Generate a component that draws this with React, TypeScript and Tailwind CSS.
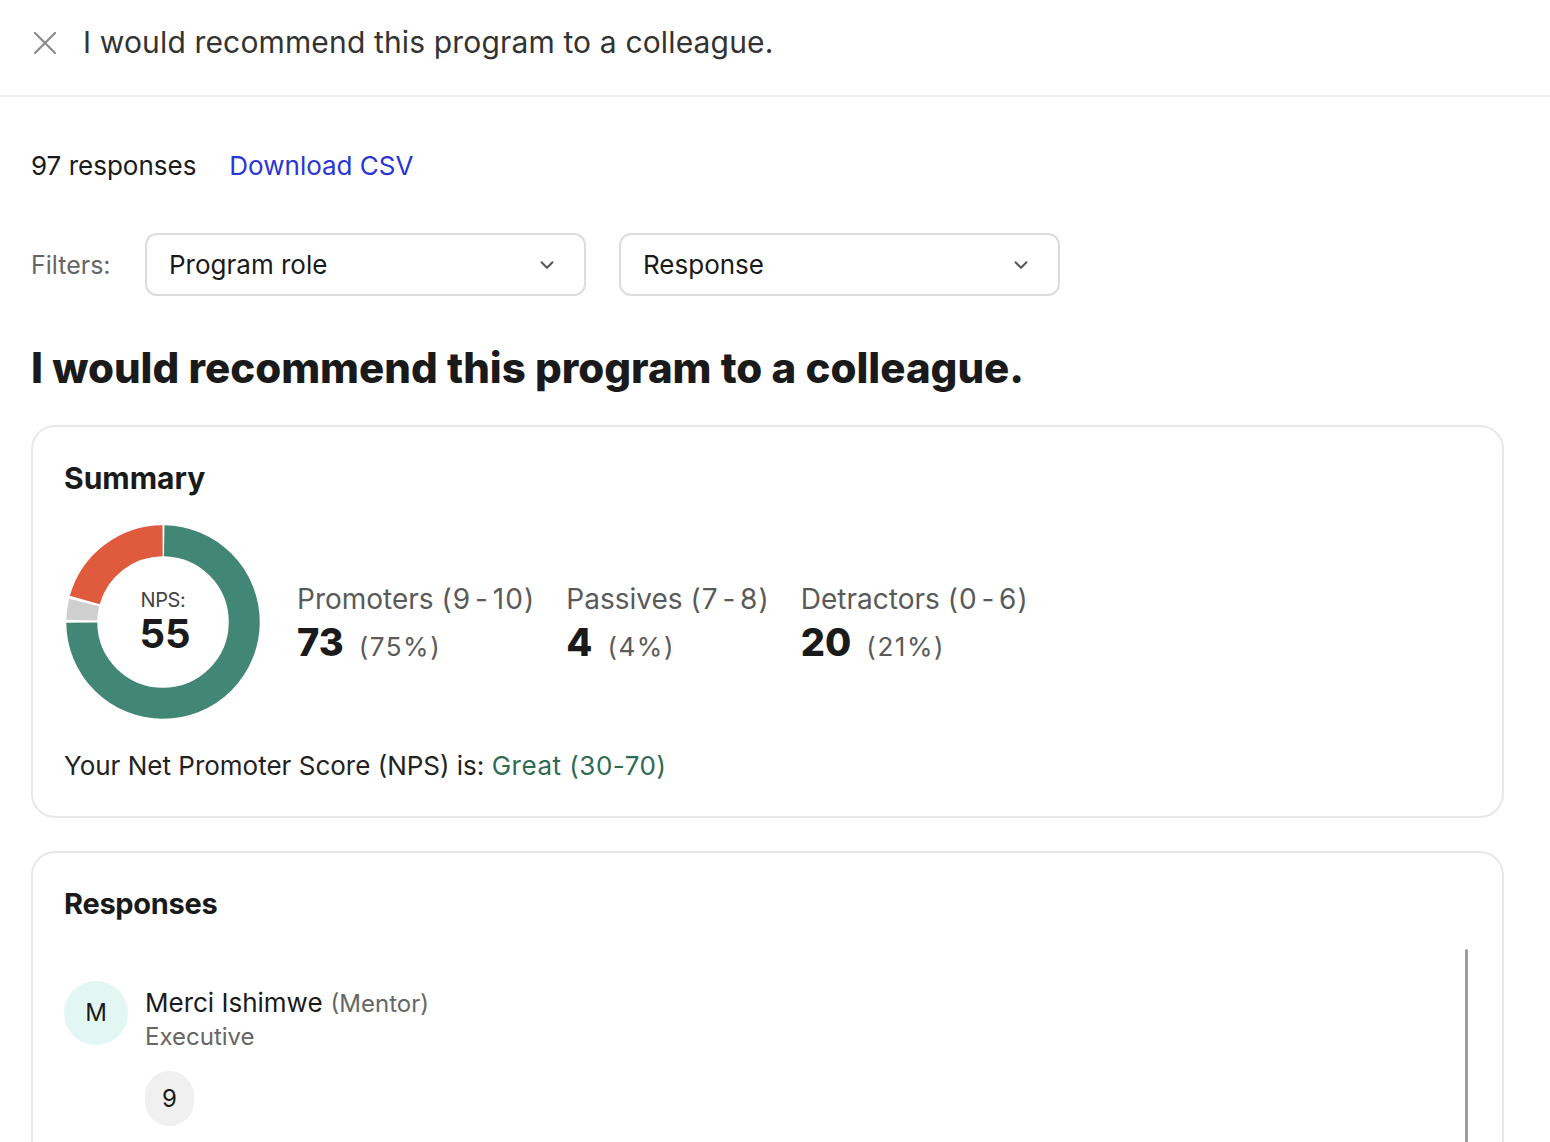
import React from "react";
import { ChevronDown } from "lucide-react";

const GREEN = "#428775";
const RED = "#e05a3e";
const GRAY = "#cfcfcf";

function Donut() {
  const r = 81.25;
  const c = 2 * Math.PI * r;
  const gap = 2.5;
  const parts = [
    { pct: 0.75, color: GREEN },
    { pct: 0.04, color: GRAY },
    { pct: 0.21, color: RED },
  ];
  let offset = 0;
  return (
    <div className="relative w-[194px] h-[194px] shrink-0 ml-[2px]">
      <svg width="194" height="194" viewBox="0 0 194 194" className="-rotate-90">
        {parts.map((p, i) => {
          const len = p.pct * c - gap;
          const el = (
            <circle
              key={i}
              cx="97"
              cy="97"
              r={r}
              fill="none"
              stroke={p.color}
              strokeWidth="31"
              strokeDasharray={`${len} ${c - len}`}
              strokeDashoffset={-(offset + gap / 2)}
            />
          );
          offset += p.pct * c;
          return el;
        })}
      </svg>
      <div className="absolute inset-0 flex flex-col items-center justify-center pb-[1px]">
        <span className="text-[20px] leading-[24px] text-[#444] tracking-[-0.02em]">NPS:</span>
        <span className="text-[40px] leading-[44px] font-bold text-[#1a1a1a] pl-[4px]">55</span>
      </div>
    </div>
  );
}

function Stat({ label, range, value, pct }: { label: string; range: string; value: string; pct: string }) {
  return (
    <div className="flex flex-col">
      <div className="text-[28px] leading-[34px] text-[#5a5a5a]">
        {label} <span className="tracking-[0.04em]">({range})</span>
      </div>
      <div className="flex items-baseline gap-[15px] mt-[4px]">
        <span className="text-[38px] leading-[44px] font-extrabold text-[#1a1a1a]">{value}</span>
        <span className="text-[26px] leading-[32px] text-[#5a5a5a] tracking-[0.06em]">({pct})</span>
      </div>
    </div>
  );
}

function Select({ label }: { label: string }) {
  return (
    <div className="flex items-center justify-between w-[441px] h-[63px] rounded-[12px] border-2 border-[#dcdcdc] pl-[22px] pr-[26px]">
      <span className="text-[26px] text-[#1a1a1a]">{label}</span>
      <ChevronDown size={22} strokeWidth={2.2} className="text-[#555]" />
    </div>
  );
}

export default function App() {
  return (
    <div className="min-h-screen bg-white font-['Inter','Liberation_Sans',sans-serif] text-[#1a1a1a]">
      <header className="flex items-center h-[97px] border-b-2 border-[#efefef] pl-[34px] gap-[27px] pb-[10px]">
        <svg width="22" height="22" viewBox="0 0 22 22" className="shrink-0">
          <path d="M1 1 L21 21 M21 1 L1 21" stroke="#8a8a8a" strokeWidth="2.2" strokeLinecap="round" />
        </svg>
        <h1 className="text-[30px] text-[#333] tracking-[0.005em]">
          I would recommend this program to a colleague.
        </h1>
      </header>

      <main className="px-[31px]">
        <div className="flex items-center gap-[33px] mt-[52px] h-[32px]">
          <span className="text-[26px] text-[#1a1a1a]">97 responses</span>
          <a className="text-[26px] text-[#2a35d6]">Download CSV</a>
        </div>

        <div className="flex items-center mt-[52px]">
          <span className="text-[25px] text-[#666] w-[114px] pt-[2px]">Filters:</span>
          <div className="flex gap-[33px]">
            <Select label="Program role" />
            <Select label="Response" />
          </div>
        </div>

        <h2 className="mt-[46px] text-[42px] leading-[52px] font-extrabold tracking-[0em] text-[#1a1a1a]">
          I would recommend this program to a colleague.
        </h2>

        <section className="mt-[31px] w-[1473px] rounded-[24px] border-2 border-[#e8e8e8] pt-[31px] pl-[31px] pb-[34px]">
          <h3 className="text-[30px] leading-[40px] font-bold tracking-[0em]">Summary</h3>
          <div className="flex items-center mt-[27px]">
            <Donut />
            <div className="flex gap-[31px] ml-[37px] pt-[2px]">
              <Stat label="Promoters" range={"9\u200A-\u200A10"} value="73" pct="75%" />
              <Stat label="Passives" range={"7\u200A-\u200A8"} value="4" pct="4%" />
              <Stat label="Detractors" range={"0\u200A-\u200A6"} value="20" pct="21%" />
            </div>
          </div>
          <p className="mt-[31px] text-[26px] leading-[32px] text-[#222]">
            Your Net Promoter Score (NPS) is:{" "}
            <span className="text-[#2f6a55] tracking-[0.02em]">Great (30-70)</span>
          </p>
        </section>

        <section className="mt-[33px] w-[1473px] h-[320px] rounded-t-[24px] border-2 border-b-0 border-[#e8e8e8] pt-[31px] pl-[31px] pr-[34px]">
          <h3 className="text-[29px] leading-[40px] font-bold tracking-[-0.01em]">Responses</h3>
          <div className="flex justify-between mt-[25px]">
            <div className="flex gap-[17px] pt-[32px]">
              <div className="w-[64px] h-[64px] rounded-full bg-[#e2f7f3] flex items-center justify-center text-[24px] text-[#1a1a1a]">
                M
              </div>
              <div className="flex flex-col">
                <div className="flex items-baseline gap-[8px] h-[40px] pt-[2px]">
                  <span className="text-[26px] text-[#1a1a1a]">Merci Ishimwe</span>
                  <span className="text-[24px] text-[#666]">(Mentor)</span>
                </div>
                <span className="text-[24px] leading-[32px] text-[#666]">Executive</span>
                <div className="mt-[18px] w-[49px] h-[55px] rounded-full bg-[#f0f0f0] flex items-center justify-center text-[24px] text-[#1a1a1a]">
                  9
                </div>
              </div>
            </div>
            <div className="w-[3px] h-[200px] bg-[#9b9b9b] rounded-full" />
          </div>
        </section>
      </main>
    </div>
  );
}
